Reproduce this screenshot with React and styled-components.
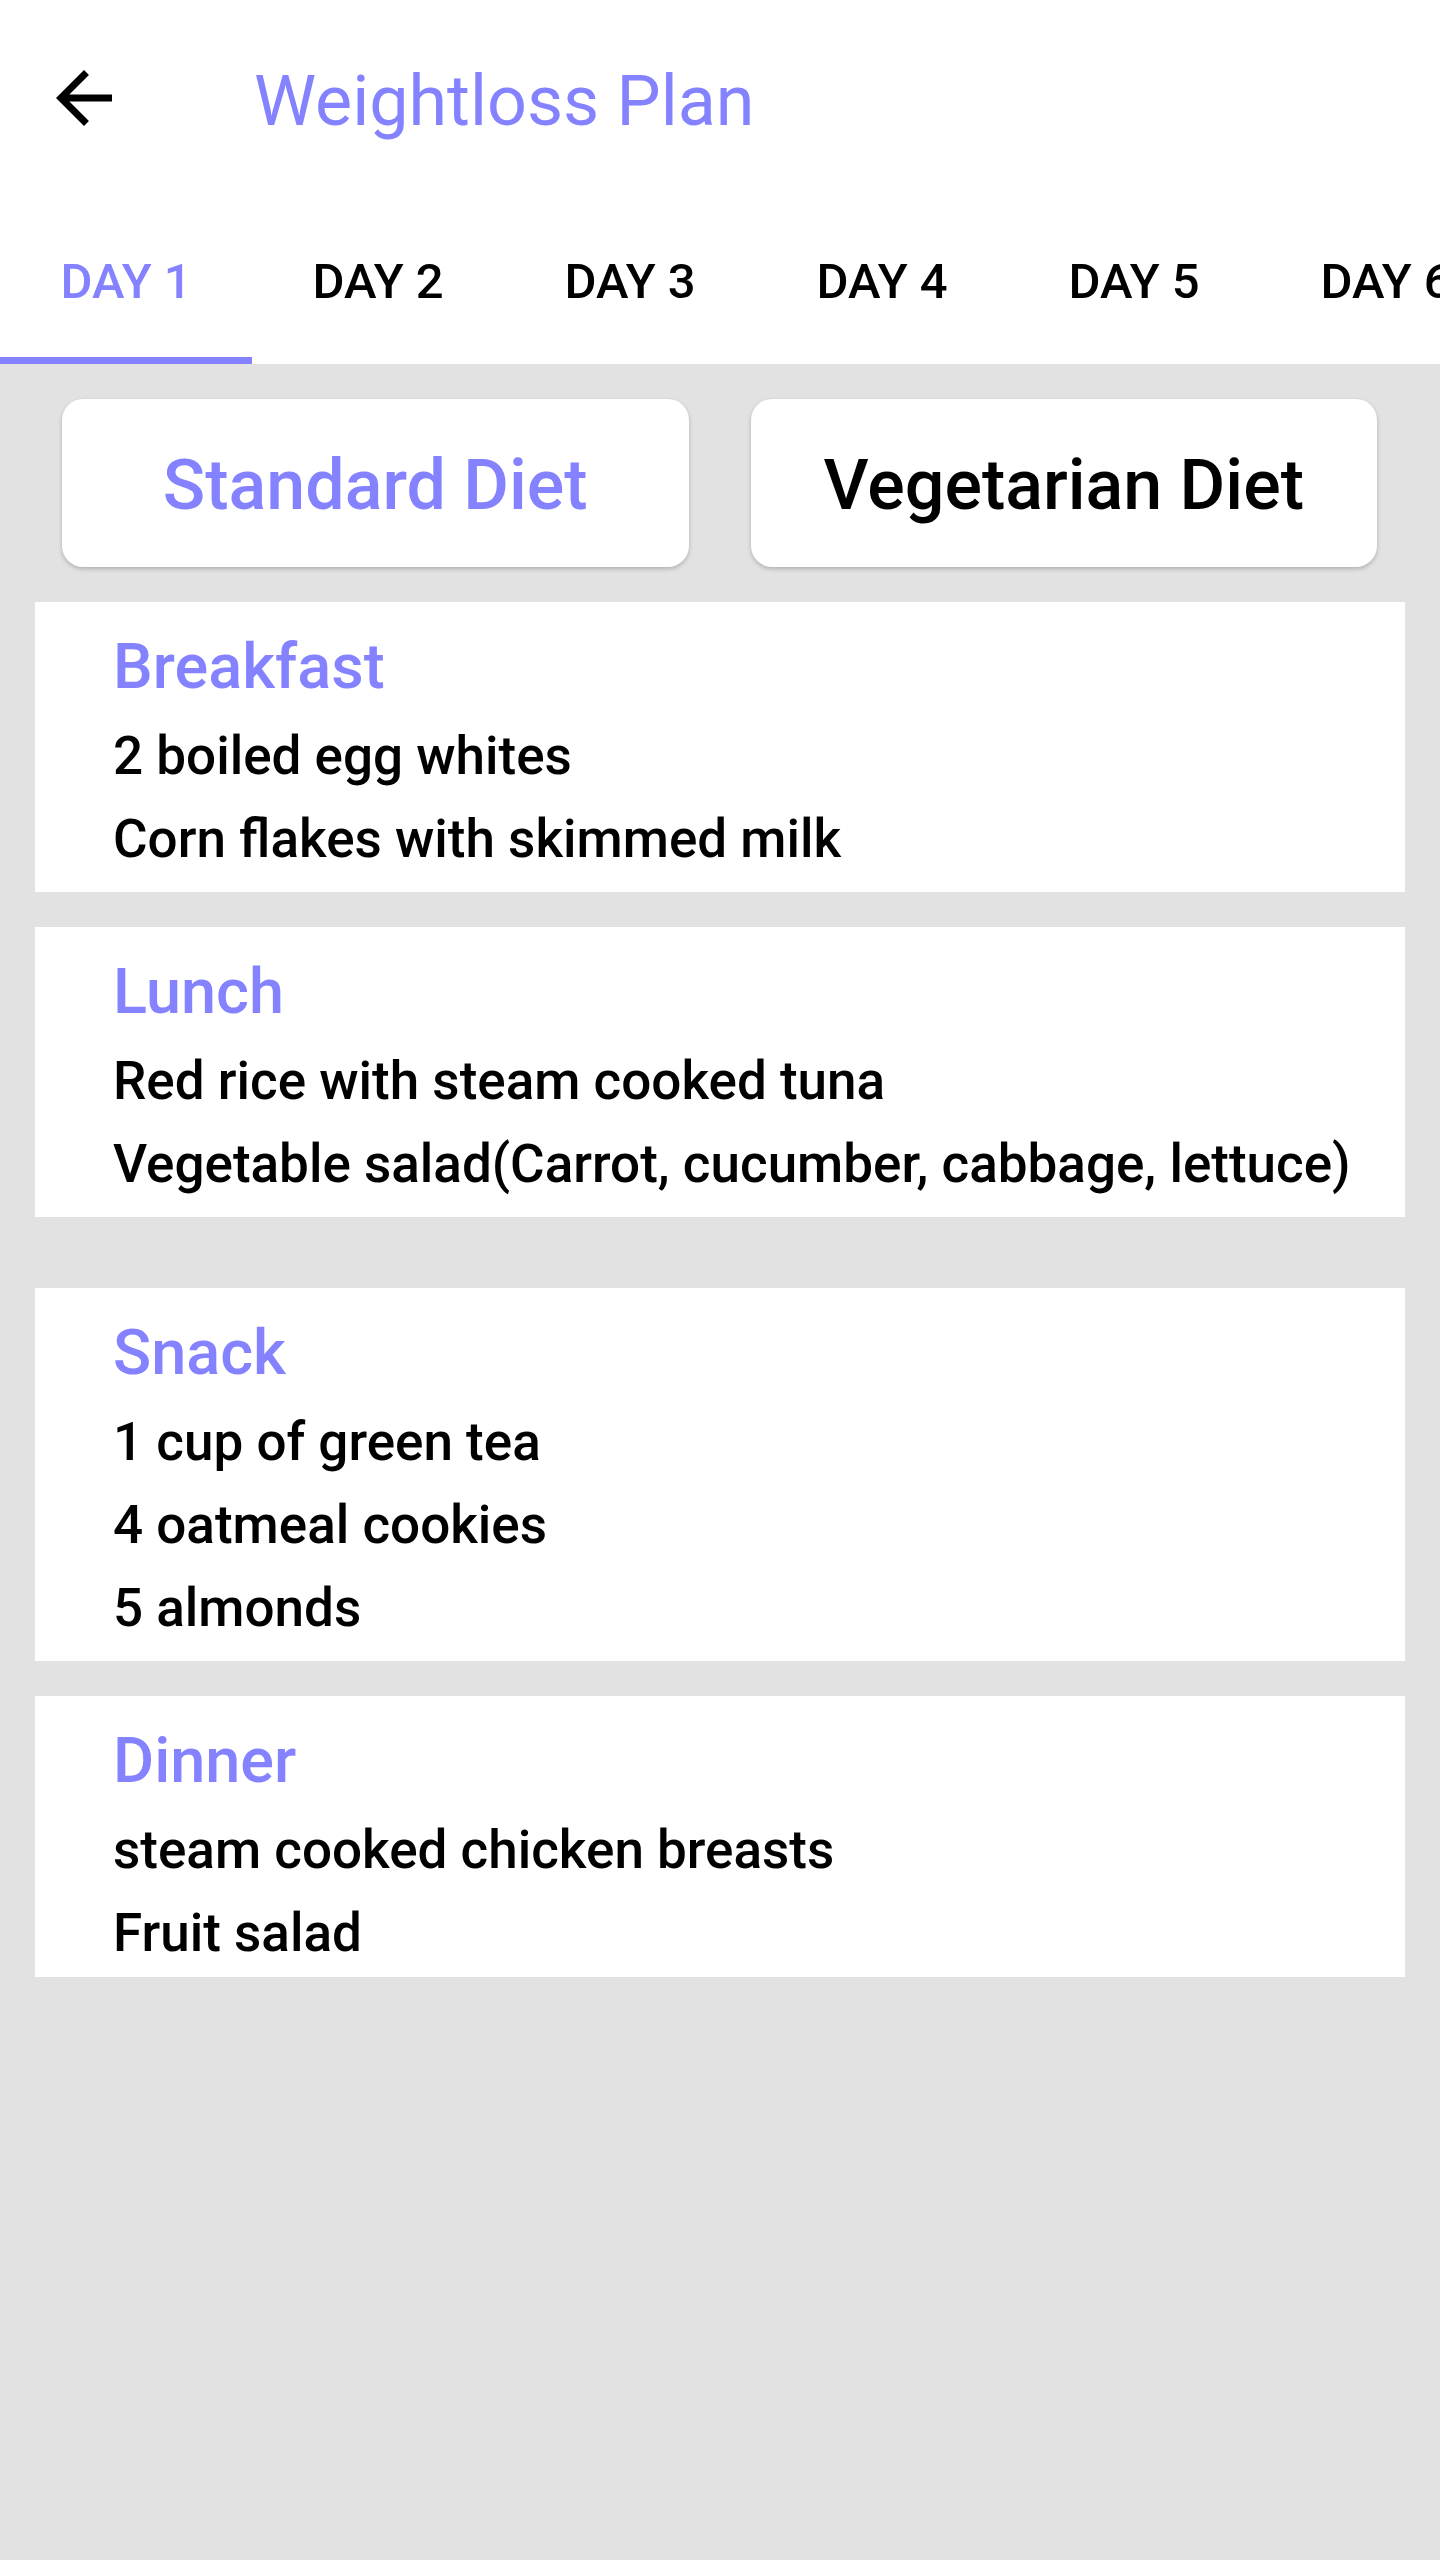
import React, { useState } from "react";
import styled, { createGlobalStyle } from "styled-components";

const PURPLE = "#8482ff";

const GlobalStyle = createGlobalStyle`
  html, body {
    margin: 0;
    padding: 0;
    background: #e2e2e2;
    font-family: Roboto, "Noto Sans", sans-serif;
  }
  * { box-sizing: border-box; }
`;

const Page = styled.div`
  width: 1440px;
  min-height: 2560px;
  background: #e2e2e2;
`;

const Header = styled.header`
  background: #fff;
`;

const Toolbar = styled.div`
  height: 196px;
  display: flex;
  align-items: center;
  padding-left: 42px;
`;

const BackButton = styled.button`
  width: 84px;
  height: 84px;
  border: none;
  background: none;
  padding: 0;
  display: flex;
  align-items: center;
  justify-content: center;
  cursor: pointer;
`;

const Title = styled.h1`
  margin: 6px 0 0 128px;
  font-size: 70px;
  font-weight: 400;
  color: ${PURPLE};
  line-height: normal;
`;

const Tabs = styled.nav`
  display: flex;
  overflow: hidden;
  height: 168px;
`;

const Tab = styled.div`
  flex: 0 0 252px;
  height: 168px;
  padding-top: 10px;
  display: flex;
  align-items: center;
  justify-content: center;
  font-size: 49px;
  font-weight: 500;
  color: ${(p) => (p.$active ? PURPLE : "#000")};
  border-bottom: 7px solid ${(p) => (p.$active ? PURPLE : "transparent")};
  cursor: pointer;
  white-space: nowrap;
`;

const DietRow = styled.div`
  display: flex;
  gap: 62px;
  padding: 35px 63px 0 62px;
`;

const DietButton = styled.button`
  flex: 1;
  height: 168px;
  border: none;
  border-radius: 21px;
  background: #fff;
  box-shadow: 0 2px 4px rgba(0, 0, 0, 0.22);
  padding-top: 5px;
  font-family: inherit;
  font-size: 70px;
  font-weight: 500;
  color: ${(p) => (p.$active ? PURPLE : "#000")};
  cursor: pointer;
`;

const Meals = styled.div`
  padding: 35px 35px 0;
`;

const Card = styled.section`
  background: #fff;
  padding: 28px 20px ${(p) => (p.$tight ? "4px" : "13px")} 78px;
  margin-bottom: ${(p) => (p.$wide ? "71px" : "35px")};
`;

const MealTitle = styled.h2`
  margin: 0 0 10px;
  font-size: 63px;
  font-weight: 500;
  line-height: normal;
  color: ${PURPLE};
`;

const Item = styled.div`
  font-size: 53px;
  font-weight: 500;
  line-height: 83px;
  padding-top: 2px;
  height: 83px;
  color: #000;
  white-space: nowrap;
`;

const BackArrow = () => (
  <svg width="84" height="84" viewBox="0 0 24 24">
    <path d="M20 11H7.83l5.59-5.59L12 4l-8 8 8 8 1.41-1.41L7.83 13H20v-2z" fill="#000" />
  </svg>
);

const days = ["DAY 1", "DAY 2", "DAY 3", "DAY 4", "DAY 5", "DAY 6"];

const meals = [
  { name: "Breakfast", items: ["2 boiled egg whites", "Corn flakes with skimmed milk"] },
  {
    name: "Lunch",
    items: ["Red rice with steam cooked tuna", "Vegetable salad(Carrot, cucumber, cabbage, lettuce)"],
    wide: true,
  },
  { name: "Snack", items: ["1 cup of green tea", "4 oatmeal cookies", "5 almonds"] },
  { name: "Dinner", items: ["steam cooked chicken breasts", "Fruit salad"], tight: true },
];

export default function App() {
  const [day, setDay] = useState(0);
  const [diet, setDiet] = useState("standard");

  return (
    <Page>
      <GlobalStyle />
      <Header>
        <Toolbar>
          <BackButton aria-label="Back">
            <BackArrow />
          </BackButton>
          <Title>Weightloss Plan</Title>
        </Toolbar>
        <Tabs>
          {days.map((d, i) => (
            <Tab key={d} $active={i === day} onClick={() => setDay(i)}>
              {d}
            </Tab>
          ))}
        </Tabs>
      </Header>
      <DietRow>
        <DietButton $active={diet === "standard"} onClick={() => setDiet("standard")}>
          Standard Diet
        </DietButton>
        <DietButton $active={diet === "vegetarian"} onClick={() => setDiet("vegetarian")}>
          Vegetarian Diet
        </DietButton>
      </DietRow>
      <Meals>
        {meals.map((m) => (
          <Card key={m.name} $wide={m.wide} $tight={m.tight}>
            <MealTitle>{m.name}</MealTitle>
            {m.items.map((it) => (
              <Item key={it}>{it}</Item>
            ))}
          </Card>
        ))}
      </Meals>
    </Page>
  );
}
